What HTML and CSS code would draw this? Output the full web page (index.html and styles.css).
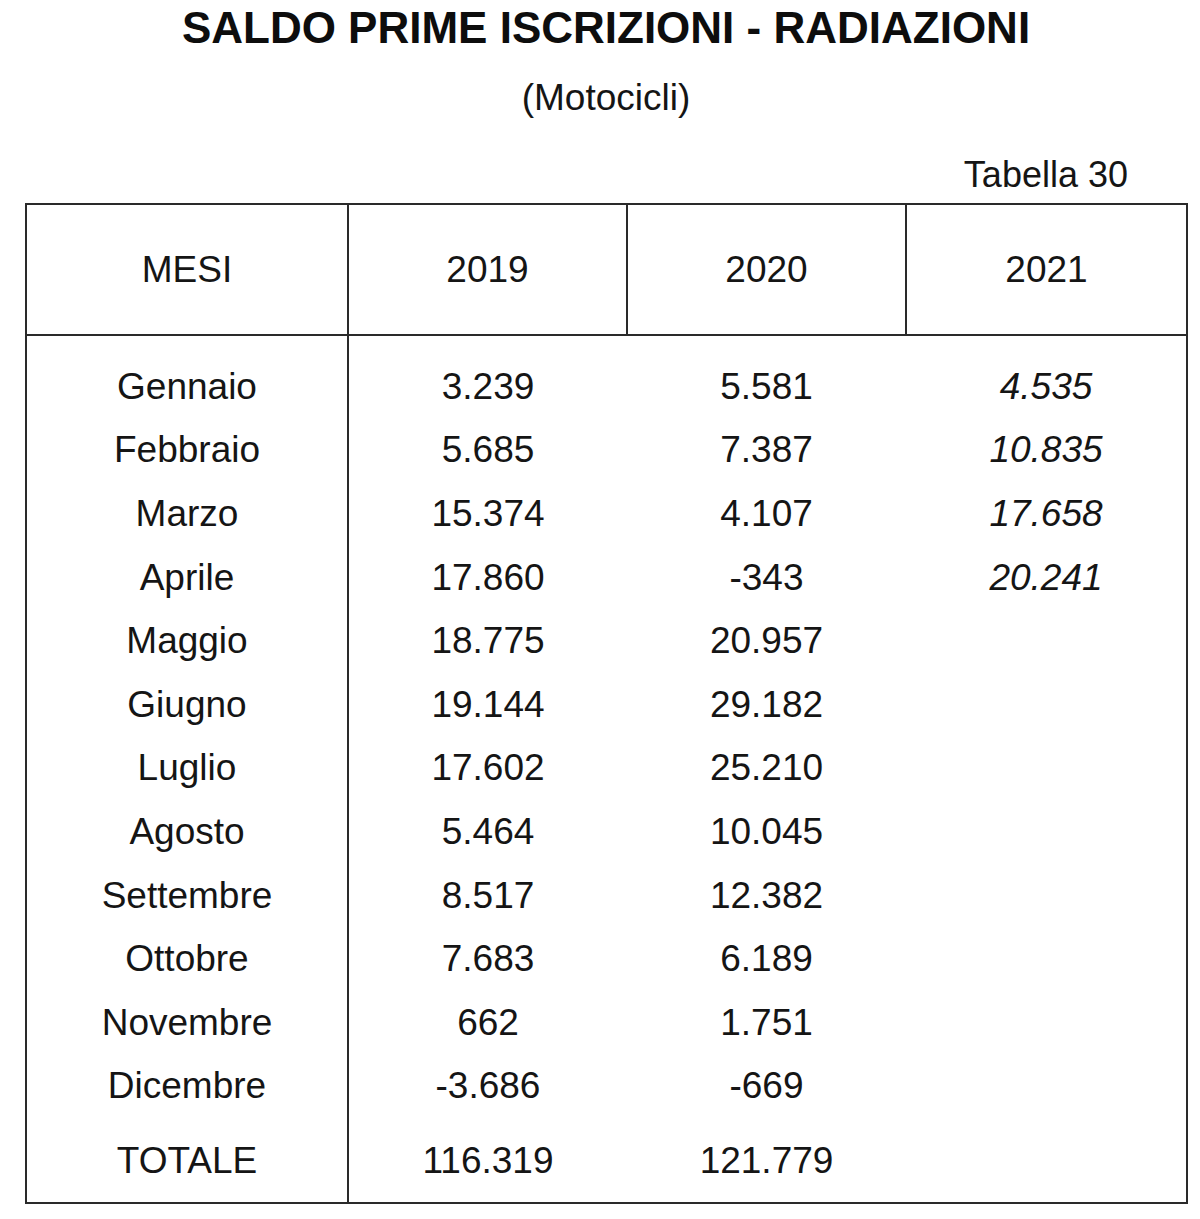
FILE: index.html
```html
<!DOCTYPE html>
<html lang="it">
<head>
<meta charset="utf-8">
<title>Saldo prime iscrizioni - radiazioni</title>
<link rel="stylesheet" href="styles.css">
</head>
<body>
<div class="page">
  <h1 class="title">SALDO PRIME ISCRIZIONI - RADIAZIONI</h1>
  <p class="subtitle">(Motocicli)</p>
  <p class="tabref">Tabella 30</p>
  <table class="data">
    <colgroup>
      <col class="c1"><col class="c2"><col class="c3"><col class="c4">
    </colgroup>
    <thead>
      <tr><th>MESI</th><th>2019</th><th>2020</th><th>2021</th></tr>
    </thead>
    <tbody>
      <tr class="first"><td>Gennaio</td><td>3.239</td><td>5.581</td><td class="it">4.535</td></tr>
      <tr><td>Febbraio</td><td>5.685</td><td>7.387</td><td class="it">10.835</td></tr>
      <tr><td>Marzo</td><td>15.374</td><td>4.107</td><td class="it">17.658</td></tr>
      <tr><td>Aprile</td><td>17.860</td><td>-343</td><td class="it">20.241</td></tr>
      <tr><td>Maggio</td><td>18.775</td><td>20.957</td><td></td></tr>
      <tr><td>Giugno</td><td>19.144</td><td>29.182</td><td></td></tr>
      <tr><td>Luglio</td><td>17.602</td><td>25.210</td><td></td></tr>
      <tr><td>Agosto</td><td>5.464</td><td>10.045</td><td></td></tr>
      <tr><td>Settembre</td><td>8.517</td><td>12.382</td><td></td></tr>
      <tr><td>Ottobre</td><td>7.683</td><td>6.189</td><td></td></tr>
      <tr><td>Novembre</td><td>662</td><td>1.751</td><td></td></tr>
      <tr><td>Dicembre</td><td>-3.686</td><td>-669</td><td></td></tr>
      <tr class="total"><td>TOTALE</td><td>116.319</td><td>121.779</td><td></td></tr>
    </tbody>
  </table>
</div>
</body>
</html>
```

FILE: styles.css
```css
html, body {
  margin: 0;
  padding: 0;
  background: #ffffff;
}

body {
  font-family: "Liberation Sans", Arial, sans-serif;
  color: #151515;
}

.page {
  width: 1200px;
  height: 1219px;
  overflow: hidden;
}

.title {
  margin: 0;
  padding-left: 12px;
  font-size: 44px;
  font-weight: bold;
  line-height: 56px;
  text-align: center;
  letter-spacing: 0;
  color: #0d0d0d;
}

.subtitle {
  margin: 22px 0 0;
  font-size: 37px;
  line-height: 40px;
  text-align: center;
  padding-left: 12px;
}

.tabref {
  margin: 37px 0 0;
  font-size: 36px;
  line-height: 40px;
  text-align: right;
  padding-right: 72px;
}

.data {
  margin: 8px 0 0 25px;
  width: 1161px;
  border-collapse: collapse;
  table-layout: fixed;
  border: 2px solid #2a2a2a;
  font-size: 37px;
}

.c1 { width: 322px; }
.c2 { width: 279px; }
.c3 { width: 279px; }
.c4 { width: 281px; }

.data th {
  font-weight: normal;
  height: 129px;
  padding: 0;
  border: 2px solid #2a2a2a;
  text-align: center;
  vertical-align: middle;
}

.data td {
  padding: 0;
  height: 63.6px;
  line-height: 40px;
  text-align: center;
  vertical-align: middle;
}

.data td:first-child {
  border-right: 2px solid #2a2a2a;
}

.data tr.first td {
  padding-top: 19px;
}

.data tr.total td {
  padding-top: 11px;
  padding-bottom: 9px;
}

.data td.it {
  font-style: italic;
}
```
